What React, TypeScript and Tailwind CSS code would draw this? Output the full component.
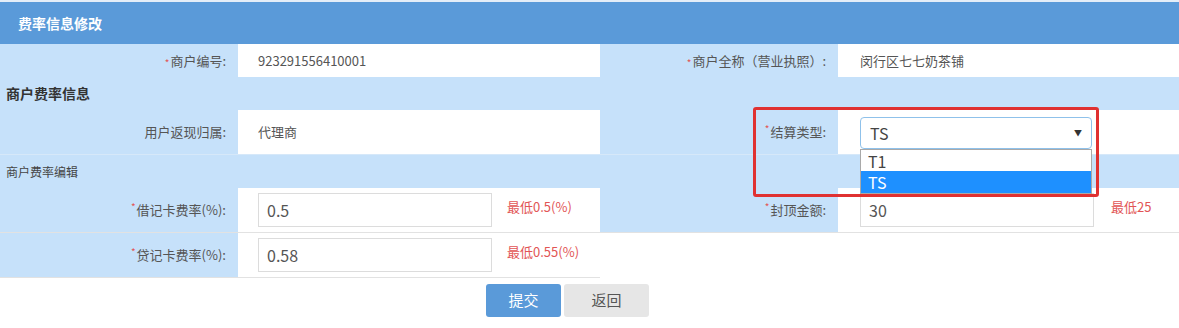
import type { ReactNode } from "react";

const Label = ({ children, required }: { children: ReactNode; required?: boolean }) => (
  <div className="bg-[#c6e1fa] flex items-center justify-end pr-[12px] text-[13px] text-[#555]">
    {required && <span className="text-[#e25555] text-[10px] leading-none self-start mt-[14px] mr-[1px]">*</span>}
    {children}
  </div>
);

const RateInput = ({ value }: { value: string }) => (
  <div className="w-[234px] h-[34px] border border-[#dcdcdc] bg-white flex items-center pl-[8px] text-[16px] text-[#555]">
    {value}
  </div>
);

const App = () => {
  return (
    <div className="w-[1179px] h-[328px] bg-white font-['Noto_Sans_CJK_SC','Noto_Sans',sans-serif] relative">
      {/* HEADER */}
      <div className="h-[44px] border-t-2 border-[#e3edf8] bg-[#5a9ad9] flex items-center pl-[18px] text-[14px] font-bold text-white">
        费率信息修改
      </div>

      {/* 商户编号 / 商户全称 */}
      <div className="grid grid-cols-[238px_362px_238px_1fr] h-[33px]">
        <Label required>商户编号:</Label>
        <div className="bg-white flex items-center pl-[20px] text-[13px] text-[#555]">923291556410001</div>
        <Label required>商户全称（营业执照）:</Label>
        <div className="bg-white flex items-center pl-[22px] text-[13px] text-[#555]">闵行区七七奶茶铺</div>
      </div>

      {/* SECTION */}
      <div className="h-[33px] bg-[#c6e1fa] flex items-center pl-[6px] text-[14px] font-bold text-[#333]">
        商户费率信息
      </div>

      {/* 用户返现归属 / 结算类型 */}
      <div className="grid grid-cols-[238px_362px_238px_1fr] h-[45px] border-b border-[#d6e8f9]">
        <Label>用户返现归属:</Label>
        <div className="bg-white flex items-center pl-[20px] text-[13px] text-[#555]">代理商</div>
        <Label required>结算类型:</Label>
        <div className="bg-white pl-[22px] pt-[7px] relative">
          <div className="w-[232px] h-[32px] border border-[#8fc1ea] rounded-[4px] bg-white flex items-center justify-between pl-[9px] pr-[9px] text-[16px] text-[#444]">
            <span>TS</span>
            <span className="text-[8px] text-[#333]">▼</span>
          </div>
          <div className="absolute left-[22px] top-[39px] w-[232px] border border-[#a9a9a9] bg-white text-[16px] leading-none text-[#444] z-10">
            <div className="h-[21px] flex items-center pl-[7px]">T1</div>
            <div className="h-[22px] flex items-center pl-[7px] bg-[#1e90ff] text-white">TS</div>
          </div>
        </div>
      </div>

      {/* SECTION */}
      <div className="h-[33px] bg-[#c6e1fa] flex items-center pl-[6px] text-[12px] text-[#444]">
        商户费率编辑
      </div>

      {/* 借记卡费率 / 封顶金额 */}
      <div className="grid grid-cols-[238px_362px_238px_1fr] h-[45px] border-b border-[#e2e2e2]">
        <Label required>借记卡费率(%):</Label>
        <div className="bg-white flex items-center pl-[20px]">
          <RateInput value="0.5" />
          <span className="self-start mt-[9px] ml-[15px] text-[13px] text-[#e25555]">最低0.5(%)</span>
        </div>
        <Label required>封顶金额:</Label>
        <div className="bg-white flex items-center pl-[22px]">
          <RateInput value="30" />
          <span className="self-start mt-[9px] ml-[17px] text-[13px] text-[#e25555]">最低25</span>
        </div>
      </div>

      {/* 贷记卡费率 */}
      <div className="grid grid-cols-[238px_362px_1fr] h-[45px]">
        <div className="grid border-b border-[#e2e2e2]">
          <Label required>贷记卡费率(%):</Label>
        </div>
        <div className="bg-white flex items-center pl-[20px] border-b border-[#e2e2e2]">
          <RateInput value="0.58" />
          <span className="self-start mt-[9px] ml-[15px] text-[13px] text-[#e25555]">最低0.55(%)</span>
        </div>
        <div />
      </div>

      {/* BUTTONS */}
      <div className="flex gap-[3px] pl-[486px] pt-[6px]">
        <button className="w-[75px] h-[33px] rounded-[3px] bg-[#5a9ad9] text-white text-[15px]">提交</button>
        <button className="w-[85px] h-[33px] rounded-[3px] bg-[#e6e6e6] text-[#555] text-[15px]">返回</button>
      </div>

      {/* ANNOTATION */}
      <div className="absolute left-[753px] top-[107px] w-[346px] h-[90px] border-[3px] border-[#e03131] rounded-[3px] z-20 pointer-events-none" />
    </div>
  );
};

export default App;
